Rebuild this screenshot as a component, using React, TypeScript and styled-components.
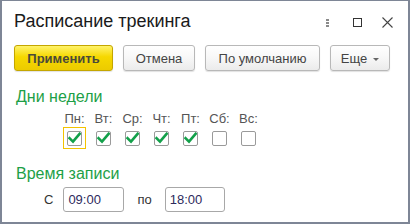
import React from 'react';
import styled, { createGlobalStyle } from 'styled-components';

const GlobalStyle = createGlobalStyle`
  html, body {
    margin: 0;
    padding: 0;
    background: #ffffff;
  }
  body {
    font-family: Arial, "Liberation Sans", sans-serif;
  }
`;

const days = [
  { label: 'Пн:', checked: true, focused: true },
  { label: 'Вт:', checked: true },
  { label: 'Ср:', checked: true },
  { label: 'Чт:', checked: true },
  { label: 'Пт:', checked: true },
  { label: 'Сб:', checked: false },
  { label: 'Вс:', checked: false },
];

const CheckMark = () => (
  <svg width="13" height="12" viewBox="0 0 13 12">
    <path d="M1.5 6.2 L5 9.6 L11.6 1.8" fill="none" stroke="#13a04a" strokeWidth="2.6" strokeLinecap="square" />
  </svg>
);

const App = () => {
  return (
    <Window>
      <GlobalStyle />
      <Header>
        <Title>Расписание трекинга</Title>
        <HeaderIcons>
          <Dots>
            <span />
            <span />
            <span />
          </Dots>
          <MaxIcon />
          <CloseIcon viewBox="0 0 11 11" width="11" height="11">
            <path d="M0.5 0.5 L10.5 10.5 M10.5 0.5 L0.5 10.5" stroke="#444" strokeWidth="1.1" fill="none" />
          </CloseIcon>
        </HeaderIcons>
      </Header>

      <Toolbar>
        <Button $primary $width={99}>Применить</Button>
        <Button $width={72}>Отмена</Button>
        <Button $width={115}>По умолчанию</Button>
        <Button $width={60}>
          Еще <Caret />
        </Button>
      </Toolbar>

      <GroupTitle>Дни недели</GroupTitle>
      <DaysGrid>
        {days.map((d) => (
          <DayColumn key={d.label}>
            <DayLabel>{d.label}</DayLabel>
            <FocusFrame $focused={!!d.focused}>
              <CheckBox>{d.checked && <CheckMark />}</CheckBox>
            </FocusFrame>
          </DayColumn>
        ))}
      </DaysGrid>

      <GroupTitle $top={15}>Время записи</GroupTitle>
      <TimeRow>
        <FieldLabel>С</FieldLabel>
        <TimeInput $width={61}>09:00</TimeInput>
        <FieldLabel $gap={13}>по</FieldLabel>
        <TimeInput $width={60}>18:00</TimeInput>
      </TimeRow>
    </Window>
  );
};

export default App;

const Window = styled.div`
  box-sizing: border-box;
  width: 410px;
  height: 224px;
  border: 2px solid #7e8696;
  border-top-width: 1px;
  background: #fff;
  padding: 0 12px;
  color: #333;
`;

const Header = styled.div`
  display: flex;
  align-items: center;
  justify-content: space-between;
  height: 38px;
  padding-top: 1px;
`;

const Title = styled.div`
  font-size: 18px;
  color: #1a1a1a;
  line-height: 22px;
`;

const HeaderIcons = styled.div`
  display: flex;
  align-items: center;
  margin-top: 3px;
`;

const Dots = styled.div`
  display: flex;
  flex-direction: column;
  gap: 1px;
  width: 3px;
  margin-right: 24px;

  span {
    width: 3px;
    height: 2px;
    background: #8a8a8a;
  }
`;

const MaxIcon = styled.div`
  box-sizing: border-box;
  width: 9px;
  height: 9px;
  border: 1px solid #333;
  margin-right: 20px;
`;

const CloseIcon = styled.svg`
  display: block;
  margin-right: 3px;
`;

const Toolbar = styled.div`
  display: flex;
  gap: 10px;
  margin-top: 5px;
`;

const Button = styled.div<{ $primary?: boolean; $width: number }>`
  box-sizing: border-box;
  width: ${(p) => p.$width}px;
  height: 26px;
  display: flex;
  align-items: center;
  justify-content: center;
  gap: 6px;
  border-radius: 3px;
  font-size: 13px;
  font-weight: ${(p) => (p.$primary ? 700 : 400)};
  color: ${(p) => (p.$primary ? '#4a4a3a' : '#444')};
  border: 1px solid ${(p) => (p.$primary ? '#c4a600' : '#b8b8b8')};
  background: ${(p) =>
    p.$primary
      ? 'linear-gradient(#fff36a, #f6d800 45%, #eccb00)'
      : 'linear-gradient(#ffffff, #f7f7f7 50%, #ebebeb)'};
  box-shadow: 0 1px 1px rgba(0, 0, 0, 0.12);
`;

const Caret = styled.span`
  width: 0;
  height: 0;
  border-left: 3px solid transparent;
  border-right: 3px solid transparent;
  border-top: 3px solid #666;
  margin-top: 2px;
`;

const GroupTitle = styled.div<{ $top?: number }>`
  margin-top: ${(p) => p.$top ?? 16}px;
  font-size: 16px;
  line-height: 19px;
  color: #1d9f47;
  padding-left: 2px;
`;

const DaysGrid = styled.div`
  display: grid;
  grid-template-columns: repeat(7, 29px);
  margin-left: 46px;
  margin-top: 5px;
`;

const DayColumn = styled.div`
  display: flex;
  flex-direction: column;
  align-items: center;
`;

const DayLabel = styled.div`
  font-size: 13px;
  line-height: 16px;
  color: #555;
`;

const FocusFrame = styled.div<{ $focused: boolean }>`
  box-sizing: border-box;
  width: 23px;
  height: 22px;
  display: flex;
  align-items: center;
  justify-content: center;
  border: 1px solid ${(p) => (p.$focused ? '#f3c300' : 'transparent')};
`;

const CheckBox = styled.div`
  box-sizing: border-box;
  width: 15px;
  height: 15px;
  border: 1px solid #9a9a9a;
  border-radius: 2px;
  background: #fff;
  display: flex;
  align-items: center;
  justify-content: center;
`;

const TimeRow = styled.div`
  display: flex;
  align-items: center;
  margin-top: 4px;
  padding-left: 30px;
`;

const FieldLabel = styled.div<{ $gap?: number }>`
  font-size: 13px;
  color: #333;
  margin-left: ${(p) => p.$gap ?? 0}px;
  margin-right: ${(p) => (p.$gap ? 13 : 10)}px;
`;

const TimeInput = styled.div<{ $width: number }>`
  box-sizing: border-box;
  width: ${(p) => p.$width}px;
  height: 25px;
  border: 1px solid #a8a8a8;
  border-radius: 3px;
  padding: 0 4px;
  display: flex;
  align-items: center;
  font-size: 13px;
  color: #2e2a5c;
`;
